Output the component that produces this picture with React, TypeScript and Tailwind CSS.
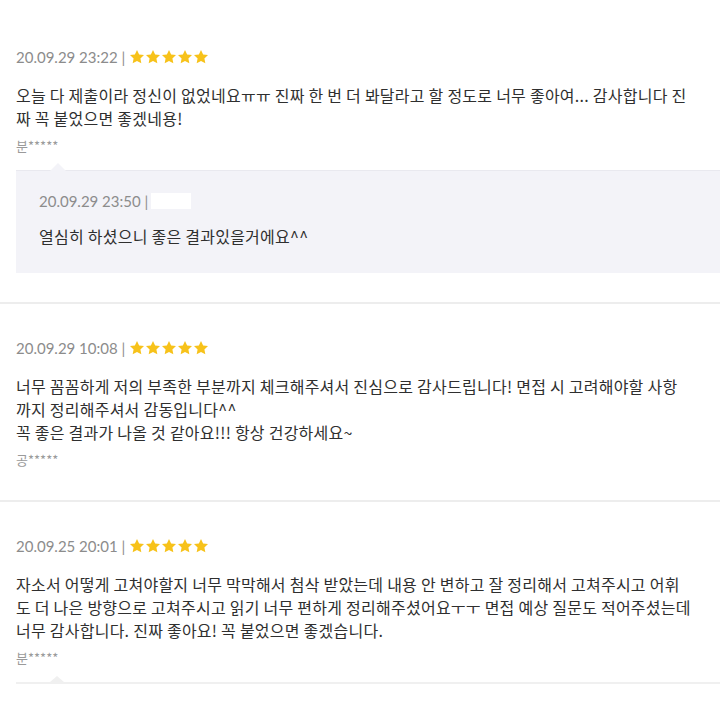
import React from 'react';

const ko = { fontFamily: '"Noto Sans CJK KR", "Noto Sans", sans-serif' };
const num = { fontFamily: 'Lato, "Open Sans", sans-serif' };

const Star = () => (
  <svg width="16" height="16" viewBox="0 0 24 24" className="shrink-0">
    <path
      d="M12 1.5l3.2 6.7 7.3.9-5.4 5.1 1.4 7.3L12 18l-6.5 3.5 1.4-7.3-5.4-5.1 7.3-.9z"
      fill="#f7c21a"
    />
  </svg>
);

const Stars = () => (
  <div className="flex items-center gap-[0px] ml-[4px]">
    <Star />
    <Star />
    <Star />
    <Star />
    <Star />
  </div>
);

interface ReviewProps {
  date: string;
  lines: string[];
  author: string;
  reply?: { date: string; text: string };
  last?: boolean;
}

const Review: React.FC<ReviewProps> = ({ date, lines, author, reply, last }) => (
  <div
    className={`px-4 pt-[36px] ${
      last ? 'pb-[16px]' : reply ? 'pb-[29px] border-b-2 border-[#ededed]' : 'pb-[32px] border-b-2 border-[#ededed]'
    }`}
  >
    <div className="flex items-center h-4 text-[15px] text-[#8c8c8c]" style={num}>
      <span>{date} |</span>
      <Stars />
    </div>
    <div className="mt-[19px] text-[16px] leading-[23px] text-[#2f2f2f] tracking-[0.25px]" style={ko}>
      {lines.map((l, i) => (
        <div key={i} className="whitespace-nowrap">{l}</div>
      ))}
    </div>
    <div className="mt-[8px] text-[13px] leading-4 text-[#9a9a9a]" style={ko}>
      {author}
    </div>
    {reply && (
      <div className="relative mt-[16px] -mr-4 bg-[#f3f3f8] border-t border-[#e9e9ef] pl-[23px] pt-[22px] pb-[25px]">
        <div className="absolute -top-[8px] left-[34px] w-0 h-0 border-l-[8px] border-r-[8px] border-b-[8px] border-l-transparent border-r-transparent border-b-[#f3f3f8]" />
        <div className="flex items-center h-4 text-[15px] text-[#8c8c8c]" style={num}>
          <span>{reply.date} |</span>
          <span className="ml-[3px] w-[40px] h-[16px] bg-white" />
        </div>
        <div className="mt-[16px] text-[16px] leading-[23px] text-[#2f2f2f] tracking-[0.25px]" style={ko}>
          {reply.text}
        </div>
      </div>
    )}
  </div>
);

export default function App() {
  return (
    <div className="w-[720px] h-[720px] overflow-hidden bg-white pt-[13px]">
      <Review
        date="20.09.29 23:22"
        lines={[
          '오늘 다 제출이라 정신이 없었네요ㅠㅠ 진짜 한 번 더 봐달라고 할 정도로 너무 좋아여... 감사합니다 진',
          '짜 꼭 붙었으면 좋겠네용!',
        ]}
        author="분*****"
        reply={{ date: '20.09.29 23:50', text: '열심히 하셨으니 좋은 결과있을거에요^^' }}
      />
      <Review
        date="20.09.29 10:08"
        lines={[
          '너무 꼼꼼하게 저의 부족한 부분까지 체크해주셔서 진심으로 감사드립니다! 면접 시 고려해야할 사항',
          '까지 정리해주셔서 감동입니다^^',
          '꼭 좋은 결과가 나올 것 같아요!!! 항상 건강하세요~',
        ]}
        author="공*****"
      />
      <Review
        date="20.09.25 20:01"
        lines={[
          '자소서 어떻게 고쳐야할지 너무 막막해서 첨삭 받았는데 내용 안 변하고 잘 정리해서 고쳐주시고 어휘',
          '도 더 나은 방향으로 고쳐주시고 읽기 너무 편하게 정리해주셨어요ㅜㅜ 면접 예상 질문도 적어주셨는데',
          '너무 감사합니다. 진짜 좋아요! 꼭 붙었으면 좋겠습니다.',
        ]}
        author="분*****"
        last
      />
      <div className="relative ml-4 h-[2px] bg-[#f0f0f0]">
        <div className="absolute -top-[6px] left-[34px] w-0 h-0 border-l-[7px] border-r-[7px] border-b-[6px] border-l-transparent border-r-transparent border-b-[#f0f0f0]" />
      </div>
    </div>
  );
}
